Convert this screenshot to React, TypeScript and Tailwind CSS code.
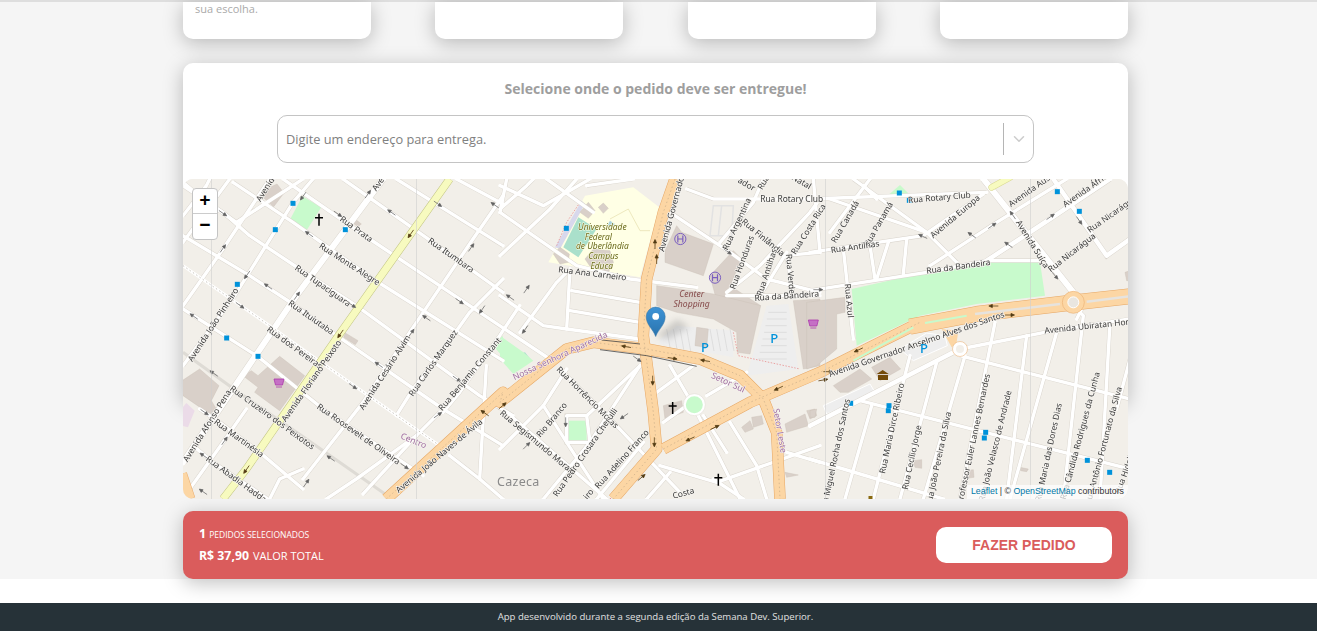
import { ChevronDown } from "lucide-react";

// map frames: coordinates below are read off 3x crops, ox is the crop's left edge in map px
const F5 = 0;
const F6 = 317;
const F7 = 627;

const pts = (ox: number, s: string) =>
  s
    .split(" ")
    .map((p) => {
      const [x, y] = p.split(",").map(Number);
      return `${ox + x / 3},${y / 3}`;
    })
    .join(" ");

type Road = [number, string, number?];

const ROADS: Road[] = [
  // down-right streets, left part
  [F5, "300,0 560,180 950,440 1100,540"],
  [F5, "150,10 330,130 570,300 960,545"],
  [F5, "0,20 120,100 200,170 350,270 520,380 890,650 990,710"],
  [F5, "480,0 750,190 960,340"],
  [F5, "640,0 960,200"],
  [F5, "820,0 960,75"],
  [F5, "0,170 200,290 330,375 440,455 780,690 960,800"],
  [F5, "0,390 225,533 420,690 630,830 720,890"],
  [F5, "50,690 110,730 230,820 360,930"],
  [F5, "30,800 90,850 240,950 260,965"],
  [F5, "0,10 60,60 160,130 360,0"],
  // up-right streets, left part
  [F5, "0,850 150,630 340,350 600,0", 6],
  [F5, "0,560 155,350 330,70 390,0"],
  [F5, "0,380 120,210 220,60 260,0"],
  [F5, "0,190 140,0"],
  [F5, "0,110 70,20 80,0"],
  [F5, "360,900 540,670 680,460 870,180 960,50"],
  [F5, "640,710 690,630 810,470 860,400 960,300"],
  [F5, "780,700 830,640 950,470 1010,380"],
  [F5, "20,930 120,790 190,690"],
  [F5, "260,960 290,900 360,870"],
  [F5, "540,945 700,770 770,700"],
  [F5, "430,960 520,900 700,770"],
  [F5, "890,900 910,560"],
  [F5, "800,830 890,900 960,960"],
  // centre
  [F6, "0,100 100,170 230,260 390,300 590,325"],
  [F6, "260,20 400,0"],
  [F6, "0,350 130,440 200,450 420,480"],
  [F6, "210,270 200,450"],
  [F6, "215,335 420,370"],
  [F6, "210,395 420,430"],
  [F6, "0,90 80,20 100,0"],
  [F6, "0,230 150,90 230,0"],
  [F6, "0,100 20,0"],
  [F6, "60,460 170,310 210,270"],
  [F6, "0,20 130,80 270,0"],
  [F6, "140,0 280,100"],
  [F6, "510,100 690,220 800,300"],
  [F6, "560,30 640,60 960,60"],
  [F6, "800,300 960,340"],
  [F6, "660,190 760,70 790,0"],
  [F6, "680,340 780,260 930,100 960,60"],
  [F6, "680,350 960,350"],
  [F6, "860,230 880,350"],
  [F6, "780,350 860,220"],
  [F6, "850,230 960,220"],
  [F6, "0,810 130,680 200,570"],
  [F6, "180,570 340,730 540,940"],
  [F6, "20,700 320,960"],
  [F6, "130,680 200,790 310,960"],
  [F6, "130,960 270,790 420,560"],
  [F6, "270,790 200,790 200,710 260,710 270,790"],
  [F6, "260,710 420,560"],
  [F6, "290,960 430,790"],
  [F6, "510,560 580,680 720,960"],
  [F6, "470,640 580,560"],
  [F6, "490,730 560,680"],
  [F6, "620,650 740,580"],
  [F6, "610,710 680,820"],
  [F6, "690,730 770,860 800,960"],
  [F6, "480,860 650,910 960,800"],
  [F6, "440,960 510,880"],
  [F6, "640,900 730,960"],
  [F6, "860,820 960,850"],
  // right
  [F7, "0,60 530,40"],
  [F7, "0,220 340,170 520,45"],
  [F7, "0,335 350,280 530,245 690,245"],
  [F7, "520,0 790,340", 6],
  [F7, "530,245 720,120 900,0", 4.5],
  [F7, "360,260 560,130 770,0"],
  [F7, "730,0 890,230 960,180", 4.5],
  [F7, "100,210 130,480"],
  [F7, "180,200 195,300"],
  [F7, "290,180 280,285"],
  [F7, "235,190 200,300"],
  [F7, "30,220 10,0"],
  [F7, "60,60 350,160 440,250"],
  [F7, "130,0 350,160"],
  [F7, "60,160 180,0"],
  [F7, "160,20 200,60"],
  [F7, "450,510 730,455 960,420"],
  [F7, "450,530 960,660"],
  [F7, "0,740 430,520", 4.5],
  [F7, "150,665 960,870"],
  [F7, "190,960 300,530"],
  [F7, "270,960 380,550"],
  [F7, "105,960 185,680"],
  [F7, "340,960 465,530"],
  [F7, "450,960 555,430"],
  [F7, "590,960 650,470"],
  [F7, "600,960 740,460"],
  [F7, "760,960 820,410 780,370"],
  [F7, "870,960 900,430"],
  [F7, "920,690 960,540"],
  [F7, "0,840 400,960"],
  [F7, "820,380 800,420"],
];

const LABELS: [number, number, number, number, string][] = [
  [F5, 250, 25, -58, "Avenida"],
  [F5, 585, 15, -55, "Ave"],
  [F5, 520, 150, 36, "Rua Prata"],
  [F5, 500, 255, 33, "Rua Monte Alegre"],
  [F5, 420, 320, 35, "Rua Tupaciguara"],
  [F5, 805, 228, 35, "Rua Itumbara"],
  [F5, 385, 415, 35, "Rua Ituiutaba"],
  [F5, 335, 505, 36, "Rua dos Pereiras"],
  [F5, 90, 437, -57, "Avenida João Pinheiro"],
  [F5, 385, 605, -55, "Avenida Floriano Peixoto"],
  [F5, 605, 580, -57, "Avenida Cesário Alvim"],
  [F5, 750, 552, -55, "Rua Carlos Marquez"],
  [F5, 860, 585, -50, "Rua Benjamin Constant"],
  [F5, 72, 740, -58, "Avenida Afonso Pena"],
  [F5, 268, 715, 36, "Rua Cruzeiro dos Peixotos"],
  [F5, 527, 765, 35, "Rua Roosevelt de Oliveira"],
  [F5, 168, 777, 36, "Rua Martinésia"],
  [F5, 160, 900, 36, "Rua Abadia Hadda"],
  [F5, 768, 830, -40, "Avenida João Naves de Ávila"],
  [F6, 277, 283, 7, "Rua Ana Carneiro"],
  [F6, 515, 100, -75, "Avenida Governador"],
  [F6, 710, 135, -65, "Rua Argentina"],
  [F6, 790, 175, 40, "Rua Finlândia"],
  [F6, 725, 250, -70, "Rua Honduras"],
  [F6, 800, 280, -72, "Rua Antilhas"],
  [F6, 872, 285, 85, "Rua Verde"],
  [F6, 860, 350, -4, "Rua da Bandeira"],
  [F6, 925, 150, -58, "Rua Costa Rica"],
  [F6, 875, 60, 0, "Rua Rotary Club"],
  [F6, 263, 655, 45, "Rua Horrêncio Moras"],
  [F6, 155, 722, -50, "Rio Branco"],
  [F6, 113, 790, 40, "Rua Segismundo Morais"],
  [F6, 255, 820, -55, "Rua Pedro Crosara Cherulli"],
  [F6, 365, 840, -48, "Rua Adelino Franco"],
  [F6, 740, 15, 30, "ador"],
  [F6, 790, 10, -60, "Rua"],
  [F6, 905, 8, 30, "Natal"],
  [F6, 550, 942, -15, "Costa"],
  [F6, 265, 945, -50, "iro"],
  [F7, 388, 55, -5, "Rua Rotary Club"],
  [F7, 105, 128, -60, "Rua Canadá"],
  [F7, 205, 135, -60, "Rua Panamá"],
  [F7, 435, 112, -40, "Avenida Europa"],
  [F7, 135, 203, -8, "Rua Antilhas"],
  [F7, 665, 30, -35, "Avenida Austr"],
  [F7, 830, 30, -35, "Avenida África"],
  [F7, 905, 105, -35, "Rua Nicarágua"],
  [F7, 785, 220, -38, "Rua Nicarágua"],
  [F7, 668, 195, 58, "Avenida Suíça"],
  [F7, 445, 262, -8, "Rua da Bandeira"],
  [F7, 118, 365, 85, "Rua Azul"],
  [F7, 320, 495, -19, "Avenida Governador Anselmo Alves dos Santos"],
  [F7, 840, 440, -6, "Avenida Ubiratan Hono"],
  [F7, 245, 748, -78, "Rua Maria Dirce Ribeiro"],
  [F7, 305, 835, -78, "Rua Cecílio Jorge"],
  [F7, 75, 830, -78, "Rua Miguel Rocha dos Santos"],
  [F7, 385, 840, -78, "Rua João Pereira da Silva"],
  [F7, 490, 780, -78, "Professor Euler Lannes Bernardes"],
  [F7, 555, 800, -76, "Rua João Velasco de Andrade"],
  [F7, 715, 820, -78, "Rua Maria das Dores Dias"],
  [F7, 810, 770, -75, "Rua Cândida Rodrigues da Cunha"],
  [F7, 880, 800, -75, "Rua Antônio Fortunato da Silva"],
  [F7, 945, 880, -70, "Rua Hidelis"],
];

const PLACES: [number, number, number, number, string][] = [
  [F5, 692, 785, 22, "Centro"],
  [F6, 180, 530, -25, "Nossa Senhora Aparecida"],
  [F6, 685, 610, 25, "Setor Sul"],
  [F6, 840, 755, 80, "Setor Leste"],
];

const STOPS: [number, number, number][] = [
  [F5, 330, 73], [F5, 277, 152], [F5, 487, 152], [F5, 163, 316], [F5, 131, 477], [F5, 225, 532],
  [F6, 199, 148],
  [F7, 268, 42], [F7, 298, 64], [F7, 742, 38], [F7, 808, 97], [F7, 122, 673], [F7, 237, 680],
  [F7, 235, 695], [F7, 527, 760], [F7, 523, 777], [F7, 832, 844], [F7, 899, 880],
];

const ARROWS: [number, number, number, number][] = [
  [F5, 360, 52, 125], [F5, 555, 45, -55], [F5, 465, 105, 35], [F5, 625, 100, 215], [F5, 765, 75, 35],
  [F5, 935, 78, 215], [F5, 120, 103, 35], [F5, 378, 165, 215], [F5, 120, 208, -55], [F5, 192, 288, 125],
  [F5, 255, 322, 215], [F5, 342, 350, -55], [F5, 172, 380, 35], [F5, 507, 378, 35], [F5, 32, 412, 215],
  [F5, 685, 462, -55], [F5, 730, 417, 215], [F5, 865, 205, -55], [F5, 830, 367, 35], [F5, 897, 392, 125],
  [F5, 587, 557, 215], [F5, 822, 600, 35], [F5, 510, 622, 35], [F5, 765, 708, -35], [F5, 665, 862, 35],
  [F5, 443, 838, 215], [F5, 125, 785, -55], [F5, 62, 830, 215], [F5, 370, 912, -55], [F5, 60, 938, 215],
  [F5, 92, 583, 215], [F5, 65, 700, 35],
  [F6, 80, 330, -55], [F6, 30, 355, 215], [F6, 75, 452, 125], [F6, 412, 540, 35], [F6, 372, 712, 145],
  [F6, 80, 800, -45], [F6, 683, 218, 35], [F6, 197, 730, 90],
  [F7, 338, 172, 205], [F7, 485, 168, 215], [F7, 547, 140, -35], [F7, 595, 197, 215], [F7, 722, 113, -35],
  [F7, 608, 108, 235], [F7, 735, 290, 50], [F7, 808, 125, 55], [F7, 25, 332, 0],
];

// darker arrows on the orange and yellow roads
const ROAD_ARROWS: [number, number, number, number][] = [
  [F5, 683, 165, 125], [F5, 472, 465, 125], [F5, 190, 872, 125], [F5, 905, 702, 215],
  [F6, 378, 503, 190], [F6, 518, 538, 10], [F6, 615, 545, 190], [F6, 465, 195, -90],
  [F6, 470, 240, -90], [F6, 458, 605, 90], [F6, 463, 790, 90], [F6, 425, 895, -40],
  [F6, 645, 745, -25], [F6, 570, 780, 155], [F6, 835, 628, 155], [F6, 8, 680, -40],
  [F7, 550, 381, 180], [F7, 600, 408, 0], [F7, 145, 513, 155], [F7, 55, 578, 0], [F7, 40, 603, -10],
];

const BUILDINGS: [number, string][] = [
  [F5, "250,30 282,15 303,42 272,83 240,55"],
  [F5, "520,123 535,135 525,143 510,132"],
  [F5, "487,462 525,485 517,497 482,475"],
  [F5, "290,532 365,590 290,695 215,640 225,625 180,590 205,575 225,590"],
  [F5, "-10,610 50,570 108,620 85,665 100,690 80,705 0,650"],
  [F6, "240,100 265,70 285,95 265,118"],
  [F6, "295,85 310,72 325,88 310,103"],
  [F6, "160,225 180,205 208,225 205,250 180,255"],
  [F6, "255,240 280,210 330,215 340,250 325,280 270,262"],
  [F6, "495,215 530,140 545,160 640,195 610,290 495,250"],
  [F6, "630,290 700,215 725,240 690,320 782,380 650,365"],
  [F6, "470,320 640,345 782,380 750,525 712,520 710,460 640,420 530,400 470,380"],
  [F6, "880,365 960,360 960,560 910,570"],
  [F6, "490,680 545,665 550,700 495,720"],
  [F6, "590,445 625,450 620,505 585,500"],
  [F6, "855,735 915,705 925,740 860,760"],
  [F6, "725,745 750,725 760,750 735,760"],
  [F6, "755,715 785,710 790,735 760,745"],
  [F6, "920,695 945,690 950,710 930,720"],
  [F6, "855,880 895,888 860,895"],
  [F7, "-10,370 105,355 105,400 80,405 80,510 20,560 -10,570"],
  [F7, "70,620 150,570 185,600 115,640 90,640"],
  [F7, "185,565 240,535 272,570 210,605"],
  [F7, "310,845 335,842 335,868 315,865"],
  [F7, "465,875 490,872 492,895 468,898"],
  [F7, "630,865 655,870 650,878 632,875"],
  [F7, "0,695 20,690 15,715 0,715"],
  [F7, "945,280 960,275 960,305 950,305"],
];

const GREENS: [number, string][] = [
  [F5, "358,52 415,85 372,152 322,120"],
  [F5, "935,505 960,470 960,535"],
  [F6, "0,470 70,520 100,545 40,585 0,540"],
  [F6, "200,725 260,725 260,785 200,785"],
  [F7, "125,330 350,280 530,250 690,250 705,350 500,375 330,410 140,500"],
  [F7, "235,48 270,18 300,48"],
];

function Cross({ f, x, y }: { f: number; x: number; y: number }) {
  const cx = f + x / 3;
  const cy = y / 3;
  return <path d={`M${cx} ${cy - 6}V${cy + 6}M${cx - 4} ${cy - 2}H${cx + 4}`} stroke="#000" strokeWidth="1.5" />;
}

function Cart({ f, x, y }: { f: number; x: number; y: number }) {
  const cx = f + x / 3;
  const cy = y / 3;
  return (
    <path
      d={`M${cx - 5} ${cy - 4}H${cx + 5}L${cx + 3.5} ${cy + 2}H${cx - 3.5}ZM${cx - 3} ${cy + 4}H${cx + 3}`}
      fill="#c56fc5"
      stroke="#ac39ac"
      strokeWidth="0.8"
    />
  );
}

function Hospital({ f, x, y }: { f: number; x: number; y: number }) {
  const cx = f + x / 3;
  const cy = y / 3;
  return (
    <g stroke="#7b5fc0" fill="none">
      <circle cx={cx} cy={cy} r="5.6" strokeWidth="1" />
      <path d={`M${cx - 2.5} ${cy - 3.5}V${cy + 3.5}M${cx + 2.5} ${cy - 3.5}V${cy + 3.5}M${cx - 2.5} ${cy}H${cx + 2.5}`} strokeWidth="1.2" />
    </g>
  );
}

function MapDrawing() {
  const floriano = pts(F5, "120,960 190,870 470,465 800,0");
  const naves = [
    pts(F5, "610,960 960,640"),
    pts(F6, "0,670 100,590 200,510 280,490 440,510 600,540 720,590 790,660 830,760 840,960"),
  ].join(" ");
  const governador = pts(F6, "525,0 490,100 440,300 430,470 460,700 470,810 340,960");
  const anselmo = [
    pts(F6, "490,810 750,670 960,580"),
    pts(F7, "130,530 330,430"),
  ].join(" ");
  const anselmoWide = pts(F7, "300,443 500,405 750,375 960,352");
  const corner = pts(F5, "-5,885 20,960");

  return (
    <svg viewBox="0 0 945 320" width="945" height="320" className="block blur-[0.35px]">
      <rect width="945" height="320" fill="#f2efe9" />

      {/* university */}
      <polygon points={pts(F6, "145,250 255,50 400,25 478,85 420,295")} fill="#ffffe5" />
      <polyline points={pts(F6, "330,120 385,90 420,155 450,155")} fill="none" stroke="#e8e2b4" strokeWidth="0.8" />
      <polygon points={pts(F6, "235,115 290,150 235,235 190,205")} fill="#aae0cb" />
      <polygon points={pts(F6, "165,205 245,65 255,75 180,210")} fill="#d8d8ec" />
      <polygon points={pts(F6, "330,125 345,135 335,145 322,138")} fill="#aad3df" />
      <polygon points={pts(F6, "40,530 75,520 95,545 60,565")} fill="#aae0cb" />

      {/* parking */}
      <polygon points={pts(F6, "480,480 530,440 700,455 700,535 480,495")} fill="#eeeeee" />
      <polygon points={pts(F6, "800,380 865,375 895,570 740,590")} fill="#eeeeee" />
      <polygon points={pts(F7, "270,510 350,462 405,470 412,500 310,545")} fill="#eeeeee" stroke="#fff" />
      <polygon points={pts(F7, "40,680 180,615 195,640 50,705")} fill="#eeeeee" stroke="#fff" />
      <polygon points={pts(F6, "640,80 700,80 695,170 630,170")} fill="none" stroke="#e2e2e2" strokeWidth="1.5" />
      <polyline points={pts(F6, "665,80 655,170")} fill="none" stroke="#e2e2e2" strokeWidth="1.5" />
      <g stroke="#d9d9d9" strokeWidth="0.8">
        {[500, 520, 540, 560, 630, 650, 670, 690].map((x) => (
          <line key={x} x1={F6 + x / 3} y1={150} x2={F6 + (x + 12) / 3} y2={172} />
        ))}
        {[400, 420, 440, 460, 480, 500, 520, 540].map((y) => (
          <line key={y} x1={F6 + 775 / 3 + (540 - y) / 14} y1={y / 3} x2={F6 + 860 / 3} y2={y / 3} />
        ))}
      </g>

      {/* pink landuse */}
      <polygon points={pts(F5, "-5,690 10,672 35,695 15,745 -5,740")} fill="#ebdbe8" />

      {GREENS.map(([f, p], i) => (
        <polygon key={i} points={pts(f, p)} fill="#c8facc" />
      ))}
      {BUILDINGS.map(([f, p], i) => (
        <polygon key={i} points={pts(f, p)} fill="#d9d0c9" stroke="#c9bfb7" strokeWidth="0.4" />
      ))}

      {/* amenity outlines in red dash */}
      <polyline points={pts(F6, "240,70 200,130 170,200")} fill="none" stroke="#e88f8f" strokeWidth="0.8" strokeDasharray="1.5 1.5" />
      <polyline points={pts(F6, "700,460 715,530 900,570")} fill="none" stroke="#e88f8f" strokeWidth="0.8" strokeDasharray="1.5 1.5" />
      <polyline points={pts(F6, "330,960 440,830")} fill="none" stroke="#e88f8f" strokeWidth="1" strokeDasharray="1.5 1.5" />

      {/* gray service roads */}
      <polyline points={pts(F5, "0,520 160,635 370,780 620,955")} fill="none" stroke="#dedbd5" strokeWidth="3" />

      {/* streets: casing first, then fill */}
      {ROADS.map(([f, p, w], i) => (
        <polyline key={i} points={pts(f, p)} fill="none" stroke="#d8d3cb" strokeWidth={(w ?? 3.4) + 0.8} />
      ))}
      {ROADS.map(([f, p, w], i) => (
        <polyline key={i} points={pts(f, p)} fill="none" stroke="#ffffff" strokeWidth={w ?? 3.4} strokeLinecap="round" strokeLinejoin="round" />
      ))}

      {/* dotted rail along Rua dos Pereiras */}
      <polyline points={pts(F5, "0,260 260,440 400,540 770,800")} fill="none" stroke="#fff" strokeWidth="3" />
      <polyline points={pts(F5, "0,260 260,440 400,540 770,800")} fill="none" stroke="#c9c5be" strokeWidth="1" strokeDasharray="1.5 2.5" />

      {/* parks on top of the streets */}
      <circle cx={F6 + 583 / 3} cy={677 / 3} r="11" fill="#fff" stroke="#dcd7cf" strokeWidth="0.5" />
      <circle cx={F6 + 583 / 3} cy={677 / 3} r="8.5" fill="#c8facc" />

      {/* primary / trunk roads */}
      {[naves, governador, anselmo, corner].map((p, i) => (
        <polyline key={i} points={p} fill="none" stroke="#e6a765" strokeWidth="11.5" strokeLinejoin="round" />
      ))}
      <polyline points={anselmoWide} fill="none" stroke="#e6a765" strokeWidth="16" strokeLinejoin="round" />
      <polyline points={floriano} fill="none" stroke="#c0c380" strokeWidth="8" />
      {[naves, governador, anselmo, corner].map((p, i) => (
        <polyline key={i} points={p} fill="none" stroke="#fcd6a4" strokeWidth="10.5" strokeLinejoin="round" />
      ))}
      <polyline points={anselmoWide} fill="none" stroke="#fcd6a4" strokeWidth="15" strokeLinejoin="round" />
      <polyline points={floriano} fill="none" stroke="#f7fabf" strokeWidth="7" />
      {[naves, governador, anselmo].map((p, i) => (
        <polyline key={i} points={p} fill="none" stroke="#c9ad8a" strokeWidth="0.7" strokeDasharray="1.5 2.5" />
      ))}
      <polyline points={pts(F6, "300,512 440,530 590,562")} fill="none" stroke="#444" strokeWidth="0.8" />
      <polyline points={pts(F6, "305,483 420,495")} fill="none" stroke="#444" strokeWidth="0.8" />
      <polyline points={pts(F7, "495,405 750,375")} fill="none" stroke="#e6e3de" strokeWidth="2.5" />
      <polyline points={pts(F7, "830,368 960,352")} fill="none" stroke="#e6e3de" strokeWidth="2.5" />
      <polyline points={pts(F7, "345,432 470,410")} fill="none" stroke="#c8facc" strokeWidth="2" />
      <polyline points={pts(F7, "130,545 310,445")} fill="none" stroke="#c8facc" strokeWidth="2" />
      <polygon points={pts(F7, "395,450 445,455 440,490 425,505")} fill="#fcd6a4" />

      {/* yellow stub top right */}
      <polyline points={pts(F7, "545,25 600,-5")} fill="none" stroke="#d8d88f" strokeWidth="6.5" strokeLinecap="round" />
      <polyline points={pts(F7, "545,25 600,-5")} fill="none" stroke="#f7fabf" strokeWidth="5.5" strokeLinecap="round" />

      {/* roundabouts */}
      <circle cx={F7 + 790 / 3} cy={370 / 3} r="11" fill="#fcd6a4" stroke="#e6a765" strokeWidth="0.5" />
      <circle cx={F7 + 790 / 3} cy={370 / 3} r="5.5" fill="#e9e6e0" stroke="#fff" />
      <circle cx={F7 + 450 / 3} cy={510 / 3} r="7.5" fill="#fff" stroke="#e6a765" strokeWidth="0.5" />
      <circle cx={F7 + 450 / 3} cy={510 / 3} r="4" fill="#f2efe9" />

      {ARROWS.map(([f, x, y, a], i) => (
        <g key={i} transform={`translate(${f + x / 3} ${y / 3}) rotate(${a})`}>
          <path d="M-5 0H3M1 -1.6L4.5 0L1 1.6Z" stroke="#6a6a6a" strokeWidth="0.7" fill="#555" />
        </g>
      ))}
      {ROAD_ARROWS.map(([f, x, y, a], i) => (
        <g key={i} transform={`translate(${f + x / 3} ${y / 3}) rotate(${a})`}>
          <path d="M-5 0H3M1 -1.6L4.5 0L1 1.6Z" stroke="#5c4318" strokeWidth="0.8" fill="#3c2c10" />
        </g>
      ))}

      {STOPS.map(([f, x, y], i) => (
        <rect key={i} x={f + x / 3 - 2.5} y={y / 3 - 2.5} width="5" height="5" fill="#0092da" />
      ))}

      <Cross f={F5} x={408} y={122} />
      <Cross f={F6} x={518} y={687} />
      <Cross f={F6} x={655} y={902} />
      <Cart f={F5} x={288} y={612} />
      <Cart f={F6} x={940} y={435} />
      <Hospital f={F6} x={541} y={180} />
      <Hospital f={F6} x={645} y={296} />
      {/* museum */}
      <path d={`M${F7 + 72.7} 191l6 4h-12zM${F7 + 68} 196h10v5h-10z`} fill="#734a08" />
      <rect x={F7 + 58.5} y="317" width="4" height="3" fill="#8a6a10" />

      <g fontFamily="'Noto Sans','Open Sans',sans-serif" fontSize="8.4" fill="#3a3a3a" stroke="#f6f4f0" strokeWidth="1.4" paintOrder="stroke" textAnchor="middle">
        {LABELS.map(([f, x, y, a, t], i) => (
          <text key={i} transform={`translate(${f + x / 3} ${y / 3}) rotate(${a})`} dy="3">
            {t}
          </text>
        ))}
      </g>
      <g fontFamily="'Noto Sans','Open Sans',sans-serif" fontSize="8.6" fill="#a06ea0" stroke="#f6f4f0" strokeWidth="1" paintOrder="stroke" textAnchor="middle">
        {PLACES.map(([f, x, y, a, t], i) => (
          <text key={i} transform={`translate(${f + x / 3} ${y / 3}) rotate(${a})`} dy="3">
            {t}
          </text>
        ))}
      </g>
      <g fontFamily="'Noto Sans',sans-serif" fontSize="8.4" fontStyle="italic" fill="#6a6a1c" stroke="#ffffe5" strokeWidth="1" paintOrder="stroke" textAnchor="middle">
        <text x={F6 + 307 / 3} y={51}>Universidade</text>
        <text x={F6 + 295 / 3} y={60.5}>Federal</text>
        <text x={F6 + 307 / 3} y={70}>de Uberlândia</text>
        <text x={F6 + 310 / 3} y={80}>Campus</text>
        <text x={F6 + 305 / 3} y={90}>Educa</text>
      </g>
      <g fontFamily="'Noto Sans',sans-serif" fontSize="8.6" fontStyle="italic" fill="#864a4a" textAnchor="middle">
        <text x={F6 + 575 / 3} y={118}>Center</text>
        <text x={F6 + 575 / 3} y={128}>Shopping</text>
      </g>
      <text x={F6 + 55 / 3} y={307} fontFamily="'Noto Sans',sans-serif" fontSize="12.5" fill="#8a8a8a" textAnchor="middle" letterSpacing="0.3">
        Cazeca
      </text>
      <g fontFamily="'Noto Sans',sans-serif" fontSize="13" fontWeight="500" fill="#0092da" textAnchor="middle">
        <text x={F6 + 615 / 3} y={173}>P</text>
        <text x={F6 + 823 / 3} y={164}>P</text>
        <text x={F7 + 342 / 3} y={174}>P</text>
      </g>

      {/* tile seams */}
      {[28.5, 233.5, 642.5, 847.5].map((x) => (
        <line key={x} x1={x} y1="0" x2={x} y2="320" stroke="#cfcfcf" strokeWidth="0.6" />
      ))}

      {/* marker */}
      <polygon points="473,157 494,140 506,148 486,160" fill="#8a8a8a" opacity="0.35" className="blur-[3px]" />
      <defs>
        <linearGradient id="pin" x1="0" y1="0" x2="0" y2="1">
          <stop offset="0" stopColor="#3d93d6" />
          <stop offset="1" stopColor="#2a73ad" />
        </linearGradient>
      </defs>
      <path
        d="M472.7 157.5C470 150 463.2 146 463.2 137.6a9.5 9.5 0 0 1 19 0C482.2 146 475.4 150 472.7 157.5Z"
        fill="url(#pin)"
        stroke="#2a6ea3"
        strokeWidth="0.5"
      />
      <circle cx="472.7" cy="137.4" r="3.4" fill="#fff" />
    </svg>
  );
}

function DeliveryMap() {
  return (
    <div className="relative h-[320px] w-[945px] overflow-hidden rounded-[10px] bg-[#f2efe9]">
      <MapDrawing />

      <div className="absolute left-[9px] top-[9px] w-[26px] overflow-hidden rounded-[4px] border border-[#c4c4c4] bg-white">
        <div className="flex h-[25px] items-center justify-center border-b border-[#ccc] font-['Liberation_Mono',monospace] text-[19px] font-bold leading-none text-black">
          +
        </div>
        <div className="flex h-[25px] items-center justify-center font-['Liberation_Mono',monospace] text-[19px] font-bold leading-none text-black">
          −
        </div>
      </div>

      <div className="absolute bottom-0 right-0 flex h-[14px] items-center bg-white/70 px-[4px] font-['Liberation_Sans',sans-serif] text-[8.8px] text-[#333]">
        <span className="text-[#0078a8]">Leaflet</span>
        <span>&nbsp;| ©&nbsp;</span>
        <span className="text-[#0078a8]">OpenStreetMap</span>
        <span>&nbsp;contributors</span>
      </div>
    </div>
  );
}

export default function App() {
  return (
    <div className="flex h-[631px] flex-col overflow-hidden bg-white font-['Open_Sans',sans-serif]">
      <main className="h-[579px] shrink-0 border-t-2 border-[#dedede] bg-[#f5f5f5]">
        <div className="ml-[183px] w-[945px]">
          <div className="flex h-[37px] justify-between">
            <div className="w-[188px] rounded-b-[10px] bg-white px-3 shadow-[0_4px_20px_rgba(0,0,0,0.25)]">
              <p className="text-[11px] leading-[14px] text-[#aaaaaa]">sua escolha.</p>
            </div>
            <div className="w-[188px] rounded-b-[10px] bg-white shadow-[0_4px_20px_rgba(0,0,0,0.25)]" />
            <div className="w-[188px] rounded-b-[10px] bg-white shadow-[0_4px_20px_rgba(0,0,0,0.25)]" />
            <div className="w-[188px] rounded-b-[10px] bg-white shadow-[0_4px_20px_rgba(0,0,0,0.25)]" />
          </div>

          <section className="mt-[24px] h-[340px] rounded-[10px] bg-white pt-[15px] shadow-[0_4px_20px_rgba(0,0,0,0.25)]">
            <h2 className="text-center text-[14px] font-bold leading-[22px] text-[#9e9e9e]">
              Selecione onde o pedido deve ser entregue!
            </h2>
            <div className="mx-auto mt-[15px] flex h-[48px] w-[757px] items-center rounded-[10px] border border-[#c4c4c4] bg-white pl-[8px]">
              <span className="flex-1 pt-[1px] text-[12.8px] text-[#808080]">Digite um endereço para entrega.</span>
              <span className="h-[32px] w-px bg-[#b5b5b5]" />
              <span className="flex w-[29px] items-center justify-center text-[#cccccc]">
                <ChevronDown size={18} strokeWidth={2} />
              </span>
            </div>
            <div className="mt-[16px]">
              <DeliveryMap />
            </div>
          </section>

          <section className="mt-[108px] flex h-[68px] items-center justify-between rounded-[10px] bg-[#da5c5c] pl-[16px] pr-[16px] text-white shadow-[0_4px_20px_rgba(0,0,0,0.25)]">
            <div>
              <p className="flex items-baseline gap-[3px] leading-[20px]">
                <strong className="text-[12.5px] font-bold">1</strong>
                <span className="text-[8.5px]">PEDIDOS SELECIONADOS</span>
              </p>
              <p className="mt-[1px] flex items-baseline gap-[4px] leading-[20px]">
                <strong className="text-[12.3px] font-bold">R$ 37,90</strong>
                <span className="text-[11px]">VALOR TOTAL</span>
              </p>
            </div>
            <button className="h-[36px] w-[176px] rounded-[10px] bg-white font-['Liberation_Sans',sans-serif] text-[14px] font-bold text-[#da5c5c]">
              FAZER PEDIDO
            </button>
          </section>
        </div>
      </main>

      <footer className="mt-[24px] flex h-[28px] shrink-0 items-center justify-center bg-[#263238] pr-[6px] text-[9.6px] text-[#e0e0e0]">
        App desenvolvido durante a segunda edição da Semana Dev. Superior.
      </footer>
    </div>
  );
}
